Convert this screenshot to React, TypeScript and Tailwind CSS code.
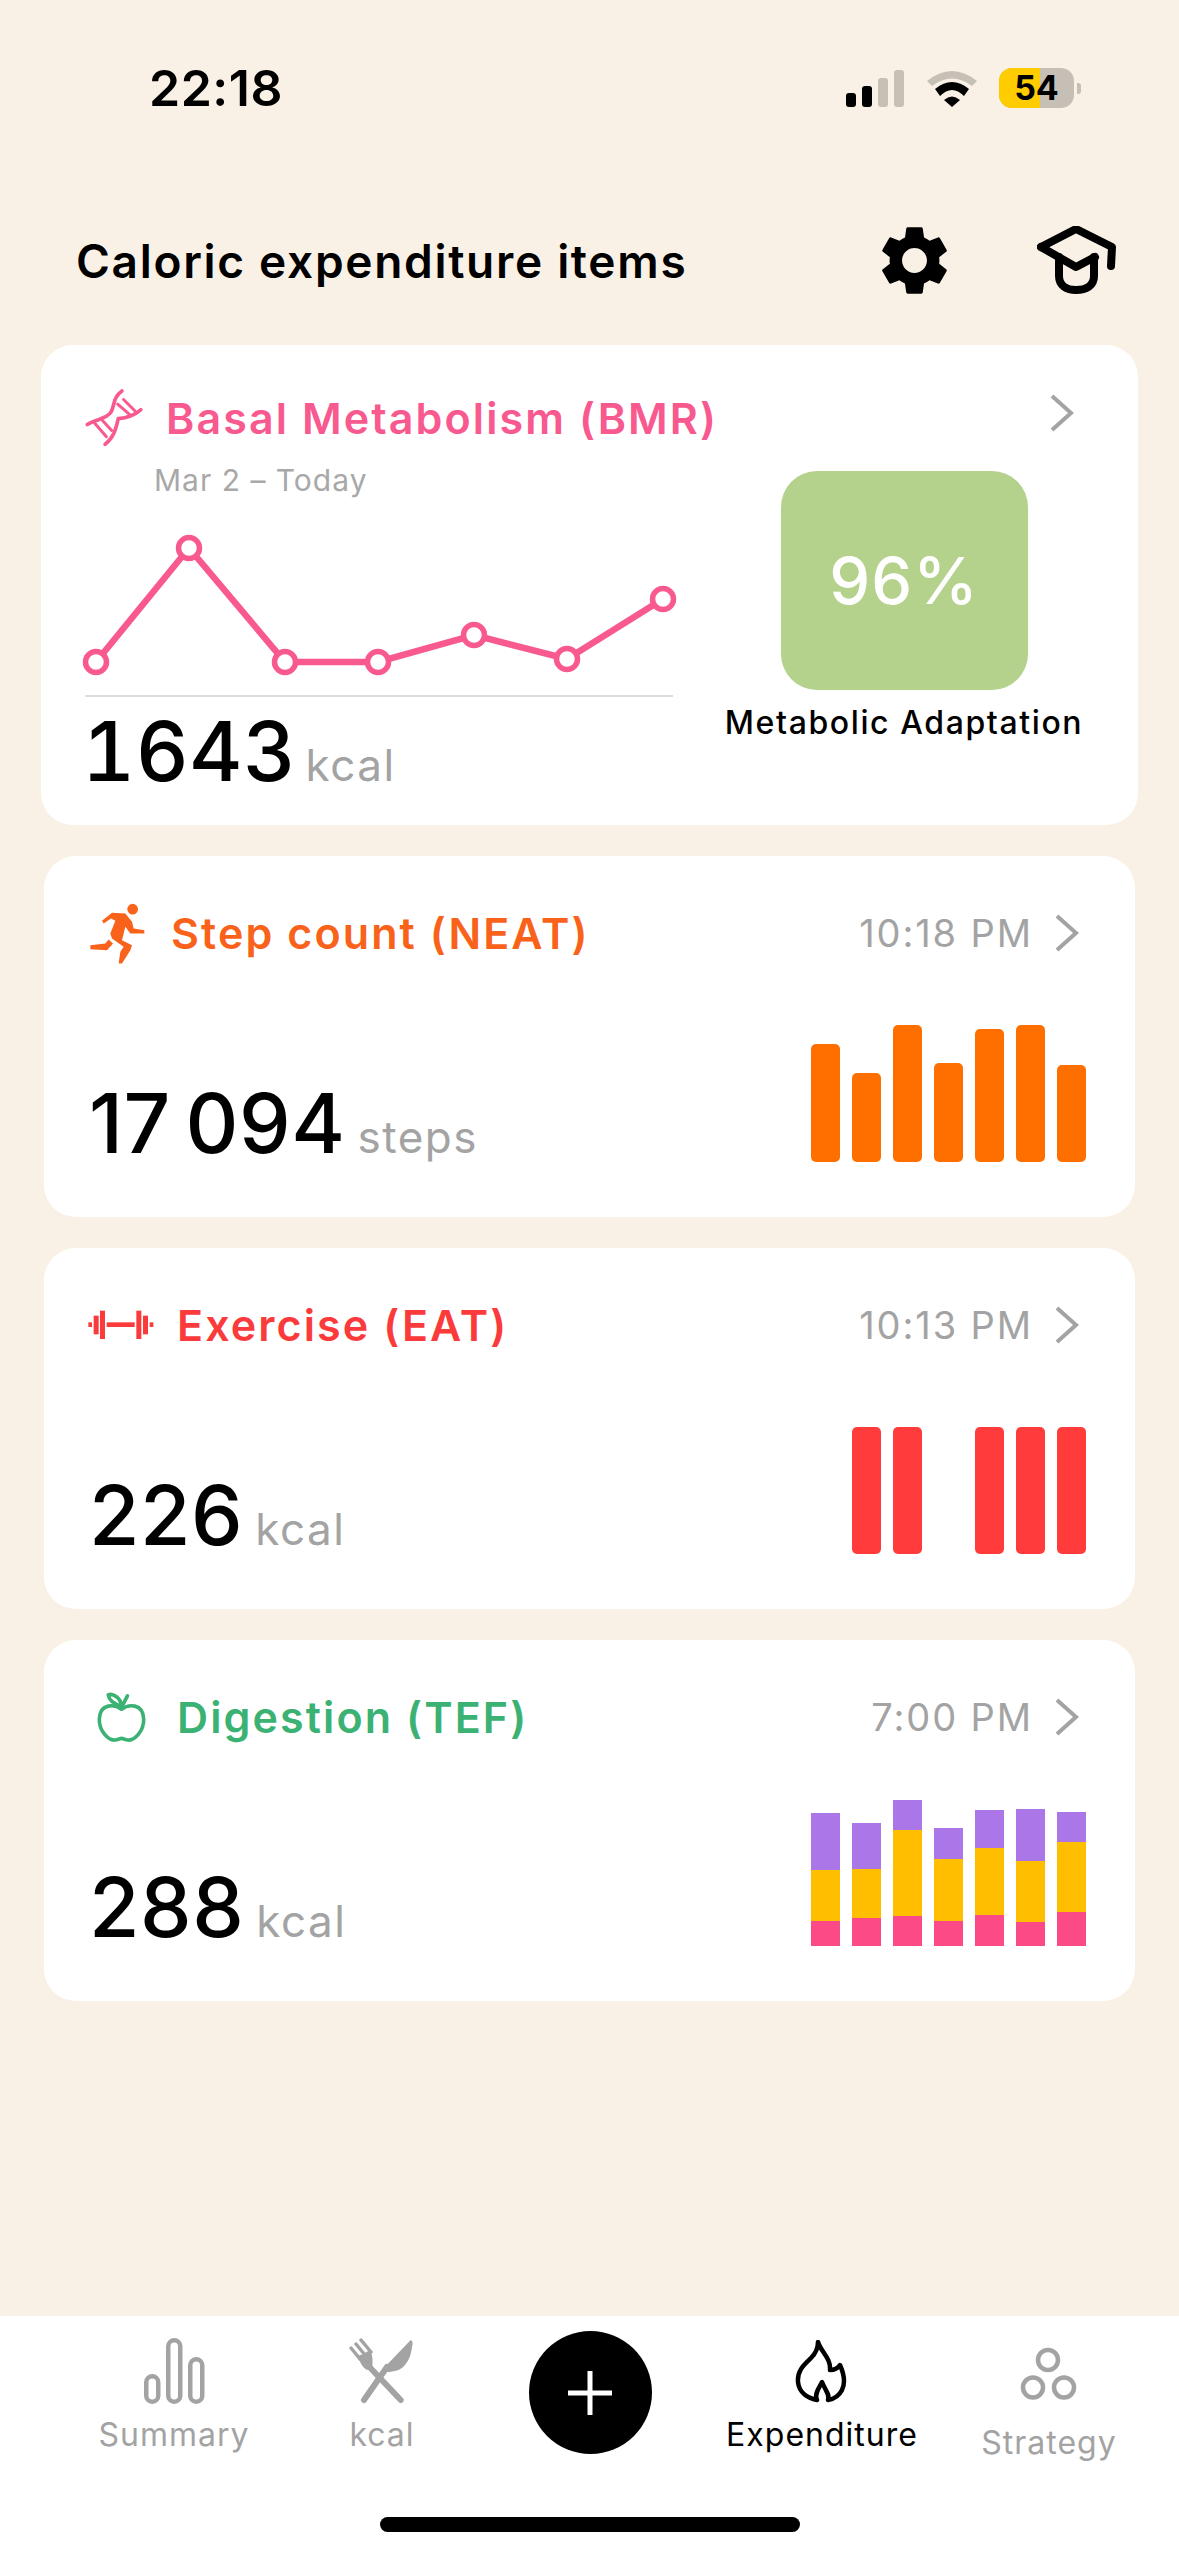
import type { ReactNode } from 'react'
import { MdSettings } from 'react-icons/md'

const stepBars = [118, 89, 137, 99, 133, 137, 97]
const exerciseBars = [0, 127, 127, 0, 127, 127, 127]
// purple, yellow, pink segment heights
const digestionBars = [
  [57, 51, 25],
  [46, 49, 28],
  [30, 86, 30],
  [31, 62, 25],
  [38, 67, 31],
  [52, 61, 24],
  [30, 70, 34],
]
const linePoints = [
  [11, 165],
  [104, 51],
  [200, 165],
  [293, 165],
  [389, 138],
  [482, 162],
  [578, 102],
]

function Chevron() {
  return (
    <svg width="24" height="38" viewBox="0 0 24 38" fill="none" className="shrink-0">
      <polyline points="2,2 21,19 2,36" stroke="#a3a3a3" strokeWidth="4" />
    </svg>
  )
}

function DnaIcon() {
  return (
    <svg width="58" height="58" viewBox="72 52 174 176" fill="none" stroke="#f8598f" strokeWidth="11" strokeLinecap="round">
      <path d="M78 160 C105 142 135 145 150 122 C162 100 155 78 183 58" />
      <path d="M132 220 C160 198 165 170 172 142 C195 140 220 132 240 115" />
      <path d="M100 155 L136 197 M120 143 L152 178 M170 98 L207 130 M188 84 L222 118" strokeWidth="9" />
    </svg>
  )
}

function RunnerIcon() {
  return (
    <svg width="60" height="67" viewBox="50 50 180 200" fill="#f9621a">
      <circle cx="187" cy="77" r="16" />
      <path d="M95 112 L125 88 L165 90 L185 115 L190 135 L222 140 L222 150 L180 150 L165 130 L155 170 L185 185 L180 200 L155 240 L145 240 L150 205 L160 190 L125 165 L120 150 L135 112 L122 105 L100 120 Z" />
      <path d="M60 185 L105 180 L115 168 L128 180 L110 200 L60 197 Z" />
    </svg>
  )
}

function DumbbellIcon() {
  return (
    <svg width="68" height="30" viewBox="50 85 204 90" fill="#fb3b3b">
      <rect x="54" y="122" width="11" height="14" />
      <rect x="70" y="102" width="15" height="56" />
      <rect x="89" y="87" width="15" height="85" />
      <rect x="109" y="122" width="84" height="14" />
      <rect x="198" y="87" width="15" height="85" />
      <rect x="218" y="102" width="15" height="56" />
      <rect x="238" y="122" width="11" height="14" />
    </svg>
  )
}

function AppleIcon() {
  return (
    <svg width="53" height="53" viewBox="70 55 160 160" fill="none" stroke="#3bb273" strokeWidth="11" strokeLinecap="round" strokeLinejoin="round">
      <path d="M150 110 C130 95 85 90 83 140 C82 175 110 205 130 203 C140 202 145 198 150 198 C155 198 160 202 170 203 C190 205 218 175 217 140 C215 90 170 95 150 110 Z" />
      <path d="M148 108 L168 70" />
      <path d="M150 100 C130 95 112 85 110 66 C125 62 148 75 150 100 Z" />
    </svg>
  )
}

function CapIcon() {
  return (
    <svg width="80" height="70" viewBox="0 0 80 70" fill="none" stroke="#000" strokeWidth="8" strokeLinecap="round" strokeLinejoin="round">
      <path d="M4 21 L39 3 L75 21 L74 40" />
      <path d="M4 21 L39 41 L58 31" />
      <path d="M22 31 L22 50 C22 60 30 64 39 64 C49 64 57 60 57 50 L57 31" />
    </svg>
  )
}

function SummaryIcon() {
  return (
    <svg width="66" height="66" viewBox="0 0 66 66" fill="none" stroke="#a3a3a3" strokeWidth="4.5">
      <rect x="5.25" y="38.25" width="12" height="25.5" rx="6" />
      <rect x="27.25" y="2.25" width="12" height="61.5" rx="6" />
      <rect x="49.25" y="21.25" width="12" height="42.5" rx="6" />
    </svg>
  )
}

function CutleryIcon() {
  return (
    <svg width="66" height="68" viewBox="0 0 66 68" fill="none" stroke="#a3a3a3" strokeLinecap="round">
      <path d="M51.7 62 L12 20" strokeWidth="6" />
      <path d="M2 10 L11 21 M7 6 L16 17 M12 2 L22 14" strokeWidth="3.5" />
      <path d="M9 19 L21 12 C24 18 24 24 23 30 L18 32 C13 29 11 24 9 19 Z" fill="#a3a3a3" stroke="none" />
      <path d="M15 62 L38 29" strokeWidth="6" />
      <path d="M33 32 L61.7 2 C64 3 64 6 63 9 C62 17 60 22 56 27 C52 32 45 34 38 34 Z" fill="#a3a3a3" stroke="none" />
    </svg>
  )
}

function FlameIcon() {
  return (
    <svg width="54" height="64" viewBox="0 0 54 64" fill="none" stroke="#000" strokeWidth="4.5" strokeLinejoin="round">
      <path d="M23 2 C26 12 36 18 35 30 C39 30 43 28 45 25 C49 34 51 42 47 50 C44 56 39 59 33 60 C35 54 30 50 27 42 C24 48 19 54 22 60 C12 58 4 52 3 42 C2 30 10 24 16 18 C20 14 23 8 23 2 Z" />
    </svg>
  )
}

function StrategyIcon() {
  return (
    <svg width="60" height="56" viewBox="0 0 60 56" fill="none" stroke="#a3a3a3" strokeWidth="4.5">
      <circle cx="29" cy="14" r="10" />
      <circle cx="14" cy="41.5" r="10" />
      <circle cx="45" cy="41.5" r="10" />
    </svg>
  )
}

function StatusBar() {
  return (
    <div className="flex h-[176px] shrink-0 items-center justify-between pl-[149px] pr-[98px]">
      <span className="text-[50px] leading-none font-semibold tracking-[0.5px] text-black">22:18</span>
      <div className="flex items-center">
        <div className="flex h-[37px] items-end gap-[6px]">
          <div className="h-[14px] w-[10px] rounded-[3px] bg-black" />
          <div className="h-[21px] w-[10px] rounded-[3px] bg-black" />
          <div className="h-[29px] w-[10px] rounded-[3px] bg-[#c6c0b7]" />
          <div className="h-[37px] w-[10px] rounded-[3px] bg-[#c6c0b7]" />
        </div>
        <svg width="50" height="38" viewBox="0 0 50 38" className="ml-[23px]">
          <path d="M0 12 Q25 -8 50 12 L45 17 Q25 2 5 17 Z" fill="#c6c0b7" />
          <path d="M8 20 Q25 6 42 20 L37 27 Q25 15 13 27 Z" fill="#000" />
          <path d="M17 31 Q25 24 33 31 L25 38 Z" fill="#000" />
        </svg>
        <div className="relative ml-[22px] flex h-[40px] w-[75px] items-center justify-center rounded-[13px] bg-[#c5bfb6]">
          <div className="absolute inset-y-0 left-0 w-[41px] rounded-l-[13px] bg-[#ffcc00]" />
          <span className="relative text-[34px] leading-none font-bold text-black">54</span>
        </div>
        <div className="ml-[3px] h-[11px] w-[4px] rounded-r-[3px] bg-[#c5bfb6]" />
      </div>
    </div>
  )
}

function Header() {
  return (
    <div className="flex h-[169px] shrink-0 items-center pl-[76px]">
      <h1 className="w-[610px] shrink-0 text-[46px] leading-none font-semibold tracking-[1.7px] whitespace-nowrap text-black">Caloric expenditure items</h1>
      <div className="ml-[187px] flex items-center">
        <MdSettings size={83} color="#000" />
        <div className="ml-[81px]">
          <CapIcon />
        </div>
      </div>
    </div>
  )
}

function Value({ value, unit, tabular }: { value: string; unit: string; tabular?: boolean }) {
  return (
    <div className={`flex items-baseline ${tabular ? 'gap-[9px]' : 'gap-[12px]'}`}>
      <span className={`text-[82px] leading-none font-medium tracking-[0.5px] text-black ${tabular ? 'tabular-nums' : ''}`}>{value}</span>
      <span className="text-[44px] leading-none tracking-[1.5px] text-[#a3a3a3]">{unit}</span>
    </div>
  )
}

function BmrCard() {
  return (
    <section className="mx-[41px] h-[480px] shrink-0 rounded-[32px] bg-white pt-[48px] pl-[44px]">
      <div className="flex h-[50px] items-center pr-[64px]">
        <div className="w-[81px] shrink-0">
          <DnaIcon />
        </div>
        <h2 className="flex-1 text-[43px] leading-none font-semibold tracking-[2.1px] text-[#f8598f]">Basal Metabolism (BMR)</h2>
        <div className="mb-[10px]">
          <Chevron />
        </div>
      </div>
      <div className="flex">
        <div className="w-[600px]">
          <p className="mt-[20px] h-[34px] pl-[69px] text-[30px] leading-[34px] tracking-[1px] text-[#a8a8a8]">Mar 2 – Today</p>
          <svg width="600" height="198" viewBox="0 0 600 198" fill="none" className="block overflow-visible">
            <polyline points={linePoints.map((p) => p.join(',')).join(' ')} stroke="#f8598f" strokeWidth="6.5" />
            {linePoints.map(([x, y]) => (
              <circle key={x} cx={x} cy={y} r="10.5" fill="#fff" stroke="#f8598f" strokeWidth="5.5" />
            ))}
          </svg>
          <div className="h-[2px] w-[588px] bg-[#dcdcdc]" />
          <div className="mt-[14px] -ml-[3px]">
            <Value value="1643" unit="kcal" tabular />
          </div>
        </div>
        <div className="ml-[19px] flex w-[400px] flex-col items-center pt-[28px]">
          <div className="flex h-[219px] w-[247px] items-center justify-center rounded-[36px] bg-[#b5d28c]">
            <span className="text-[65px] leading-none font-medium tracking-[1px] text-white">96%</span>
          </div>
          <p className="mt-[13px] text-[32px] leading-[40px] font-medium tracking-[1.6px] whitespace-nowrap text-black">Metabolic Adaptation</p>
        </div>
      </div>
    </section>
  )
}

type CardProps = {
  icon: ReactNode
  iconWidth: string
  title: string
  titleColor: string
  time: string
  value: string
  unit: string
  chart: ReactNode
}

function MetricCard({ icon, iconWidth, title, titleColor, time, value, unit, chart }: CardProps) {
  return (
    <section className="mx-[44px] mt-[31px] flex h-[361px] shrink-0 flex-col justify-between rounded-[32px] bg-white pt-[52px] pr-[49px] pb-[55px] pl-[43px]">
      <div className="flex h-[50px] items-center pr-[7px]">
        <div className={`flex shrink-0 items-center ${iconWidth}`}>{icon}</div>
        <h2 className={`flex-1 text-[43px] leading-none font-semibold tracking-[2.1px] ${titleColor}`}>{title}</h2>
        <span className="mr-[22px] text-[38px] leading-none tracking-[1.9px] text-[#a3a3a3]">{time}</span>
        <Chevron />
      </div>
      <div className="flex items-end justify-between">
        <div className="-mb-[3px] ml-[2px]">
          <Value value={value} unit={unit} />
        </div>
        {chart}
      </div>
    </section>
  )
}

function SolidBars({ heights, color }: { heights: number[]; color: string }) {
  return (
    <div className="flex items-end gap-[12px]">
      {heights.map((h, i) => (
        <div key={i} className={`w-[29px] rounded-[5px] ${color}`} style={{ height: h }} />
      ))}
    </div>
  )
}

function StackedBars() {
  return (
    <div className="flex items-end gap-[12px]">
      {digestionBars.map(([purple, yellow, pink], i) => (
        <div key={i} className="flex w-[29px] flex-col">
          <div className="bg-[#ab76e8]" style={{ height: purple }} />
          <div className="bg-[#ffbf00]" style={{ height: yellow }} />
          <div className="bg-[#fb4a86]" style={{ height: pink }} />
        </div>
      ))}
    </div>
  )
}

function TabLabel({ children, active, className }: { children: string; active?: boolean; className: string }) {
  return (
    <span className={`text-[32px] leading-[40px] tracking-[1px] whitespace-nowrap ${active ? 'text-black' : 'text-[#a3a3a3]'} ${className}`}>
      {children}
    </span>
  )
}

function TabBar() {
  return (
    <nav className="flex h-[240px] shrink-0 flex-col items-center justify-between bg-white pb-[24px]">
      <div className="grid w-full grid-cols-[228px_188px_228px_236px_216px] pt-[15px] pl-[60px]">
        <div className="flex flex-col items-center pt-[7px]">
          <SummaryIcon />
          <TabLabel className="mt-[11px]">Summary</TabLabel>
        </div>
        <div className="flex flex-col items-center pt-[7px]">
          <CutleryIcon />
          <TabLabel className="mt-[9px]">kcal</TabLabel>
        </div>
        <div className="flex justify-center">
          <div className="flex h-[123px] w-[123px] items-center justify-center rounded-full bg-black">
            <svg width="44" height="44" viewBox="0 0 44 44" stroke="#fff" strokeWidth="5">
              <path d="M22 0 V44 M0 22 H44" />
            </svg>
          </div>
        </div>
        <div className="flex flex-col items-center pt-[9px]">
          <FlameIcon />
          <TabLabel active className="mt-[11px]">Expenditure</TabLabel>
        </div>
        <div className="flex flex-col items-center pt-[15px] pl-[2px]">
          <StrategyIcon />
          <TabLabel className="mt-[21px]">Strategy</TabLabel>
        </div>
      </div>
      <div className="h-[15px] w-[420px] rounded-full bg-black" />
    </nav>
  )
}

export default function App() {
  return (
    <div className="flex h-[2556px] w-[1179px] flex-col overflow-hidden bg-[#faf1e6] [font-family:Inter,sans-serif]">
      <StatusBar />
      <Header />
      <BmrCard />
      <MetricCard
        icon={<RunnerIcon />}
        iconWidth="w-[84px]"
        title="Step count (NEAT)"
        titleColor="text-[#f9621a]"
        time="10:18 PM"
        value={'17\u2009094'}
        unit="steps"
        chart={<SolidBars heights={stepBars} color="bg-[#ff6f00]" />}
      />
      <MetricCard
        icon={<DumbbellIcon />}
        iconWidth="w-[90px]"
        title="Exercise (EAT)"
        titleColor="text-[#fb3b3b]"
        time="10:13 PM"
        value="226"
        unit="kcal"
        chart={<SolidBars heights={exerciseBars} color="bg-[#ff3b3b]" />}
      />
      <MetricCard
        icon={
          <div className="pl-[8px]">
            <AppleIcon />
          </div>
        }
        iconWidth="w-[90px]"
        title="Digestion (TEF)"
        titleColor="text-[#3bb273]"
        time="7:00 PM"
        value="288"
        unit="kcal"
        chart={<StackedBars />}
      />
      <div className="flex-1" />
      <TabBar />
    </div>
  )
}
